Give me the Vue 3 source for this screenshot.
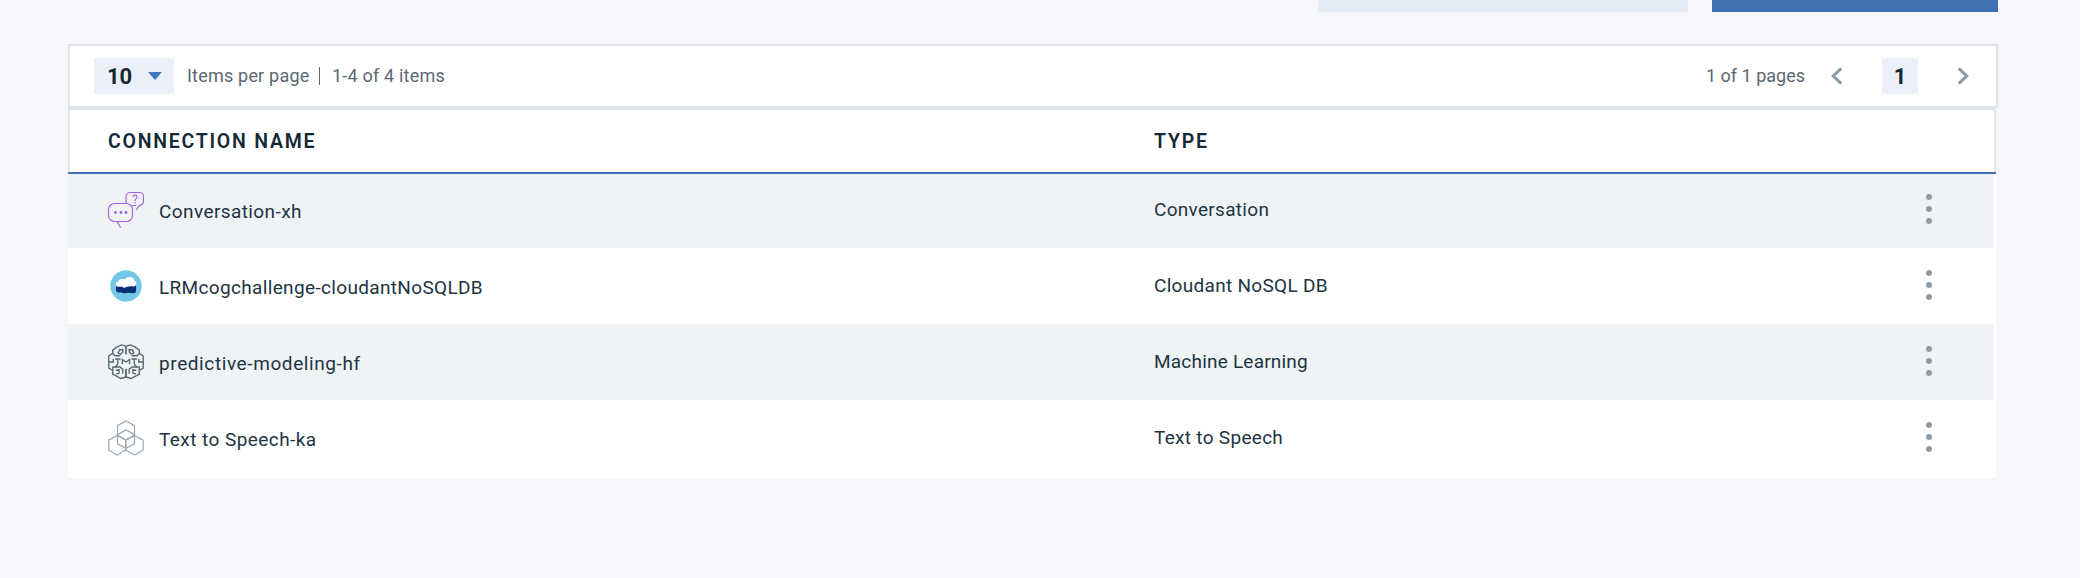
<script setup>
const rows = [
  { icon: 'chat', name: 'Conversation-xh', type: 'Conversation', nameTrack: 0.41, typeTrack: 0.3 },
  { icon: 'cloud', name: 'LRMcogchallenge-cloudantNoSQLDB', type: 'Cloudant NoSQL DB', nameTrack: 0.34, typeTrack: 0.3 },
  { icon: 'brain', name: 'predictive-modeling-hf', type: 'Machine Learning', nameTrack: 0.6, typeTrack: 0.21 },
  { icon: 'hex', name: 'Text to Speech-ka', type: 'Text to Speech', nameTrack: 0.44, typeTrack: 0.3 }
]
</script>

<template>
  <main class="page">
    <div class="actions">
      <div class="btn secondary"></div>
      <div class="btn primary"></div>
    </div>

    <div class="pager">
      <div class="size">
        <b>10</b>
        <svg width="14" height="8" viewBox="0 0 14 8"><path d="M0 0h14L7 8z" fill="#4178be" /></svg>
      </div>
      <span class="info per">Items per page</span>
      <span class="bar"></span>
      <span class="info range">1-4 of 4 items</span>
      <span class="info pages">1 of 1 pages</span>
      <svg class="chev prev" width="12" height="18" viewBox="0 0 12 18"><path d="M10.3 1.3L2.3 9l8 7.7" /></svg>
      <b class="current">1</b>
      <svg class="chev next" width="12" height="18" viewBox="0 0 12 18"><path d="M1.7 1.3L9.7 9l-8 7.7" /></svg>
    </div>

    <div class="table">
      <div class="head">
        <span class="h-name">CONNECTION NAME</span>
        <span class="h-type">TYPE</span>
      </div>
      <div class="rule"></div>
      <div v-for="r in rows" :key="r.name" class="row">
        <div class="name-cell">
          <svg v-if="r.icon === 'chat'" class="icon" viewBox="0 0 36 36" fill="none" stroke="#a35fd8" stroke-width="1.1">
            <path d="M9.2 29.5H6.5a6 6 0 0 1-6-6v-6a6 6 0 0 1 6-6h12a6 6 0 0 1 6 6v6a6 6 0 0 1-6 6H9.2l3.4 6.2" />
            <path d="M18 11.2V4.5a4 4 0 0 1 4-4h9.5a4 4 0 0 1 4 4v4.8c0 2.4-1.4 3.8-4.2 4.3l-3 4.4M24.4 13.5h3.8" />
            <path d="M25 4.9c.1-2.4 4-2.4 4 0 0 1.7-2 1.7-2 4.2" />
            <g fill="#a35fd8" stroke="none"><circle cx="7.4" cy="20.5" r="1.4" /><circle cx="12.9" cy="20.5" r="1.4" /><circle cx="18" cy="20.5" r="1.4" /><circle cx="27" cy="10.8" r=".8" /></g>
          </svg>
          <svg v-else-if="r.icon === 'cloud'" class="icon" viewBox="0 0 36 36">
            <circle cx="18" cy="18" r="15.7" fill="#72c7e7" />
            <path d="M8 17h20v6c0 2-2 2.500-4 2-2 .2-3-.7-5-.1-2 .5-4 .5-6-.4-3 .2-5-.5-5-2.500z" fill="#0b2d78" />
            <path d="M8.600 18.200c-2-1.400-1.200-4.500 1.800-4.700.8-3 4.800-3.200 6.500-2 2-3.500 8.800-3.300 9.800 1.200 2.200 1.300 2.300 4.100.3 5.300-1.200.7-2.400.8-3.200.1-2.400 1-4.700.2-5.800 1.100-1.600 1-3 .2-4.200-.8-1.800.6-3.500.4-5.200-.2z" fill="#fff" />
          </svg>
          <svg v-else-if="r.icon === 'brain'" class="icon" viewBox="0 0 36 36" fill="none" stroke="#566875" stroke-width="1.35">
            <g v-for="side in ['', 'translate(36 0) scale(-1 1)']" :key="side" :transform="side">
              <path d="M18 2.200L13.500.9 8.800 3.200 4.700 6.200V9.400L.8 12v12l4 2.300v4l3.300 1.600 4.700 2.600L18 33" />
              <path d="M18 2.200v8M14.800 4.800V8l-2.300 2.200-2.400-1.200 1.500-3.300h3.200M4.700 9.400l2.400 2.300h5.200M.8 18h4.500v-3M7.100 15h5.500M9.800 15v5l-2.600 3.200M14.400 20v-4.400L18 18" />
              <path d="M4.800 26.300V23h7l3 2.200v4.600M7.800 26.500l3.200-.8v3.600l-3 .6M18 25v8" />
            </g>
          </svg>
          <svg v-else class="icon" viewBox="0 0 36 36" fill="none" stroke="#9aa8b2" stroke-width="1.2">
            <path d="M18 1l8.500 4.700v9.600L18 20l-8.500-4.700V5.700z" />
            <path d="M18 9.900l8.500 4.700v9.300L18 28.300l-8.500-4.400v-9.300z" />
            <path d="M9.200 15.500l8.600 4.700v9.800l-8.600 5L.7 30v-9.800z" />
            <path d="M26.500 15.500l8.700 4.700V30l-8.700 5-8.700-5v-9.800z" />
          </svg>
          <span class="name" :style="{ letterSpacing: r.nameTrack + 'px' }">{{ r.name }}</span>
        </div>
        <span class="type" :style="{ letterSpacing: r.typeTrack + 'px' }">{{ r.type }}</span>
        <div class="menu"><i></i><i></i><i></i></div>
      </div>
    </div>
  </main>
</template>

<style>
body { background: #f5f7fb; }
</style>

<style scoped>
.page { box-sizing: border-box; width: 2080px; height: 578px; padding: 0 82px 0 68px; background: #f5f7fb; font-family: Roboto, "Liberation Sans", sans-serif; color: #152935; overflow: hidden; }
.actions { display: flex; justify-content: flex-end; gap: 24px; margin-bottom: 32px; height: 12px; }
.secondary { width: 370px; background: #e2eaf4; }
.primary { width: 286px; background: #4071b3; }
.pager { box-sizing: border-box; width: 1930px; height: 64px; display: flex; align-items: center; border: 2px solid #dfe3e6; background: #fff; padding: 0 28px 0 24px; white-space: nowrap; }
.size { box-sizing: border-box; width: 80px; height: 36px; padding: 0 12px 0 13px; display: flex; align-items: center; justify-content: space-between; background: #ebf0f8; }
b { font-size: 22px; font-weight: 700; line-height: 37px; }
.info { font-size: 18px; line-height: 36px; color: #5a6872; }
.per { margin-left: 13px; width: 132px; letter-spacing: 0.2px; }
.bar { width: 1px; height: 18px; background: #5a6872; }
.range { margin-left: 12px; letter-spacing: 0.2px; }
.pages { margin-left: auto; width: 98px; }
.chev { fill: none; stroke: #8c9ba5; stroke-width: 3; }
.prev { margin-left: 27px; }
.current { width: 36px; height: 36px; margin: 0 39px 0 39px; background: #ebf0f8; text-align: center; }
.next { margin-right: -1px; }
.table { width: 1928px; background: #fff; padding-bottom: 2px; }
.head { box-sizing: border-box; height: 64px; display: grid; grid-template-columns: 1046px 1fr; border: 2px solid #dfe6eb; border-bottom: 0; padding-left: 38px; font-size: 19.5px; font-weight: 600; line-height: 64px; letter-spacing: 1.75px; }
.rule { height: 2px; background: #4071b3; }
.row { box-sizing: border-box; width: 1926px; height: 76px; padding: 20px 62px 0 40px; display: grid; grid-template-columns: 1046px 1fr 6px; align-items: start; font-size: 19px; color: #1d3442; white-space: nowrap; }
.rule + .row { height: 74px; padding-top: 18px; }
.row:nth-child(odd) { background: #eff3f6; }
.name-cell { display: flex; align-items: flex-start; gap: 15px; height: 36px; }
.icon { width: 36px; height: 36px; flex: none; }
.name { line-height: 39px; }
.type { line-height: 35px; }
.menu { display: flex; flex-direction: column; gap: 6px; padding-top: 2px; }
.menu i { width: 6px; height: 6px; border-radius: 50%; background: #8c9ba5; }
</style>
